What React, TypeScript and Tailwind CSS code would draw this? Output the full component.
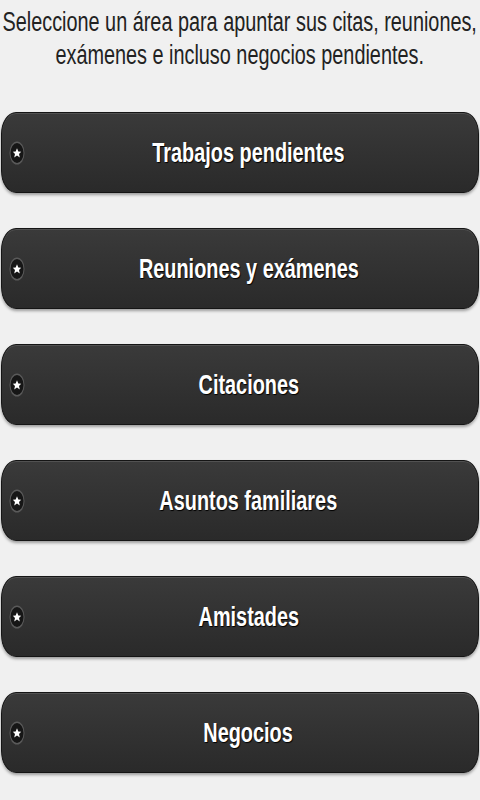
import React from "react";

const items = [
  "Trabajos pendientes",
  "Reuniones y exámenes",
  "Citaciones",
  "Asuntos familiares",
  "Amistades",
  "Negocios",
];

const StarBadge = () => (
  <svg width="16" height="24" viewBox="0 0 16 24" className="shrink-0">
    <ellipse cx="8" cy="12" rx="7.5" ry="11.5" fill="#5a5a5a" />
    <ellipse cx="8" cy="12" rx="6.5" ry="10" fill="#161616" />
    <path
      d="M8 7.2 L9.3 10.6 L12.2 10.8 L10 13 L10.8 16.4 L8 14.5 L5.2 16.4 L6 13 L3.8 10.8 L6.7 10.6 Z"
      fill="#ffffff"
    />
  </svg>
);

const HeaderLine = ({ children }: { children: React.ReactNode }) => (
  <div className="flex justify-center">
    <span className="inline-block shrink-0 whitespace-nowrap scale-x-[0.735]">
      {children}
    </span>
  </div>
);

export default function App() {
  return (
    <div
      className="min-h-[800px] w-[480px] overflow-hidden bg-[#f0f0f0]"
      style={{ fontFamily: '"Liberation Sans", Arial, sans-serif' }}
    >
      <div className="pt-[6px] text-[27px] leading-[33px] text-[#222222]">
        <HeaderLine>Seleccione un área para apuntar sus citas, reuniones,</HeaderLine>
        <HeaderLine>exámenes e incluso negocios pendientes.</HeaderLine>
      </div>

      <ul className="mt-[40px] flex flex-col gap-[35px] px-[1px]">
        {items.map((label) => (
          <li key={label}>
            <button className="relative flex h-[81px] w-full items-center rounded-[15px/22px] border border-[#151515] bg-gradient-to-b from-[#3a3a3a] to-[#2a2a2a] pl-[7px] shadow-[0_2px_3px_rgba(0,0,0,0.35),inset_0_1px_0_rgba(255,255,255,0.12)]">
              <StarBadge />
              <span className="flex flex-1 justify-center pr-[6px]">
                <span className="inline-block shrink-0 whitespace-nowrap scale-x-[0.71] text-[28px] font-bold text-white [text-shadow:1px_1px_1px_#000]">
                  {label}
                </span>
              </span>
            </button>
          </li>
        ))}
      </ul>
    </div>
  );
}
